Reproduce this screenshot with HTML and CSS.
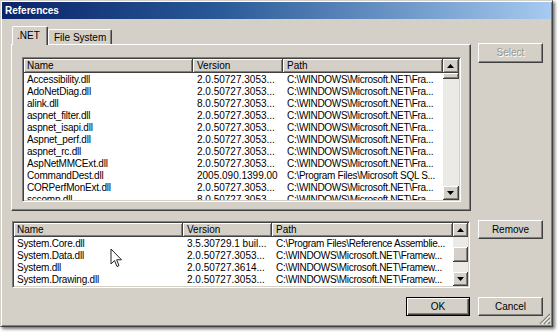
FILE: index.html
```html
<!DOCTYPE html>
<html>
<head>
<meta charset="utf-8">
<title>References</title>
<link rel="stylesheet" href="styles.css">
</head>
<body>
<div class="window">
  <div class="titlebar"><span class="title">References</span></div>
  <div class="content">
    <div class="row-top">
      <div class="tabs-area">
        <div class="tabstrip">
          <div class="tab tab-active">.NET</div>
          <div class="tab">File System</div>
        </div>
        <div class="panel">
          <div class="list list-top">
            <div class="list-main">
              <div class="hdr">
                <div class="hc w1">Name</div>
                <div class="hc w2">Version</div>
                <div class="hc w3">Path</div>
              </div>
              <div class="row"><div class="cell w1">Accessibility.dll</div><div class="cell w2">2.0.50727.3053...</div><div class="cell w3">C:\WINDOWS\Microsoft.NET\Fra...</div></div>
              <div class="row"><div class="cell w1">AdoNetDiag.dll</div><div class="cell w2">2.0.50727.3053...</div><div class="cell w3">C:\WINDOWS\Microsoft.NET\Fra...</div></div>
              <div class="row"><div class="cell w1">alink.dll</div><div class="cell w2">8.0.50727.3053...</div><div class="cell w3">C:\WINDOWS\Microsoft.NET\Fra...</div></div>
              <div class="row"><div class="cell w1">aspnet_filter.dll</div><div class="cell w2">2.0.50727.3053...</div><div class="cell w3">C:\WINDOWS\Microsoft.NET\Fra...</div></div>
              <div class="row"><div class="cell w1">aspnet_isapi.dll</div><div class="cell w2">2.0.50727.3053...</div><div class="cell w3">C:\WINDOWS\Microsoft.NET\Fra...</div></div>
              <div class="row"><div class="cell w1">Aspnet_perf.dll</div><div class="cell w2">2.0.50727.3053...</div><div class="cell w3">C:\WINDOWS\Microsoft.NET\Fra...</div></div>
              <div class="row"><div class="cell w1">aspnet_rc.dll</div><div class="cell w2">2.0.50727.3053...</div><div class="cell w3">C:\WINDOWS\Microsoft.NET\Fra...</div></div>
              <div class="row"><div class="cell w1">AspNetMMCExt.dll</div><div class="cell w2">2.0.50727.3053...</div><div class="cell w3">C:\WINDOWS\Microsoft.NET\Fra...</div></div>
              <div class="row"><div class="cell w1">CommandDest.dll</div><div class="cell w2">2005.090.1399.00</div><div class="cell w3">C:\Program Files\Microsoft SQL S...</div></div>
              <div class="row"><div class="cell w1">CORPerfMonExt.dll</div><div class="cell w2">2.0.50727.3053...</div><div class="cell w3">C:\WINDOWS\Microsoft.NET\Fra...</div></div>
              <div class="row"><div class="cell w1">sccomp.dll</div><div class="cell w2">8.0.50727.3053...</div><div class="cell w3">C:\WINDOWS\Microsoft.NET\Fra...</div></div>
            </div>
            <div class="vscroll">
              <div class="sbtn"><svg width="7" height="4" viewBox="0 0 7 4"><path d="M3.5 0 L7 4 L0 4 Z" fill="#000"/></svg></div>
              <div class="thumb thumb-top"></div>
              <div class="track"></div>
              <div class="sbtn"><svg width="7" height="4" viewBox="0 0 7 4"><path d="M0 0 L7 0 L3.5 4 Z" fill="#000"/></svg></div>
            </div>
          </div>
        </div>
      </div>
      <div class="side">
        <div class="btn btn-disabled">Select</div>
      </div>
    </div>

    <div class="row-mid">
      <div class="list list-bot">
        <div class="list-main">
          <div class="hdr">
            <div class="hc w1">Name</div>
            <div class="hc w2">Version</div>
            <div class="hc w3">Path</div>
          </div>
          <div class="row"><div class="cell w1">System.Core.dll</div><div class="cell w2">3.5.30729.1 buil...</div><div class="cell w3">C:\Program Files\Reference Assemblie...</div></div>
          <div class="row"><div class="cell w1">System.Data.dll</div><div class="cell w2">2.0.50727.3053...</div><div class="cell w3">C:\WINDOWS\Microsoft.NET\Framew...</div></div>
          <div class="row"><div class="cell w1">System.dll</div><div class="cell w2">2.0.50727.3614...</div><div class="cell w3">C:\WINDOWS\Microsoft.NET\Framew...</div></div>
          <div class="row"><div class="cell w1">System.Drawing.dll</div><div class="cell w2">2.0.50727.3053...</div><div class="cell w3">C:\WINDOWS\Microsoft.NET\Framew...</div></div>
        </div>
        <div class="vscroll vscroll-bot">
          <div class="sbtn"><svg width="7" height="4" viewBox="0 0 7 4"><path d="M3.5 0 L7 4 L0 4 Z" fill="#000"/></svg></div>
          <div class="track track-a"></div>
          <div class="thumb thumb-bot"></div>
          <div class="track"></div>
          <div class="sbtn"><svg width="7" height="4" viewBox="0 0 7 4"><path d="M0 0 L7 0 L3.5 4 Z" fill="#000"/></svg></div>
        </div>
      </div>
      <div class="btn btn-remove">Remove</div>
    </div>

    <div class="row-bot">
      <div class="btn btn-default">OK</div>
      <div class="btn">Cancel</div>
    </div>
  </div>
  <svg class="grip" width="12" height="12" viewBox="0 0 12 12">
    <path d="M11 1 L1 11 M11 5 L5 11 M11 9 L9 11" stroke="#808080" stroke-width="1.2"/>
    <path d="M11 2.5 L2.5 11 M11 6.5 L6.5 11" stroke="#fff" stroke-width="1"/>
  </svg>
</div>
<svg class="cursor" width="13" height="21" viewBox="0 0 13 21">
  <path d="M1 1 L1 16 L4.5 12.5 L7 18.5 L9 17.6 L6.6 11.8 L11.5 11.8 Z" fill="#fff" stroke="#222" stroke-width="1" stroke-linejoin="round"/>
</svg>
</body>
</html>
```

FILE: styles.css
```css
* { box-sizing: border-box; }
html, body { margin: 0; padding: 0; }
body {
  background: #ffffff;
  width: 558px;
  height: 333px;
  overflow: hidden;
  position: relative;
  font-family: "Liberation Sans", Arial, sans-serif;
  font-size: 10px;
  color: #000;
}
.window {
  position: relative;
  width: 553px;
  height: 327px;
  background: #d4d0c8;
  border-top: 1px solid #d4d0c8;
  border-left: 1px solid #d4d0c8;
  border-right: 1px solid #404040;
  border-bottom: 1px solid #404040;
  box-shadow: inset 1px 1px #ffffff, inset -1px -1px #808080, 2px 2px 3px rgba(0,0,0,0.55);
  padding: 1px;
  display: flex;
  flex-direction: column;
}
.titlebar {
  height: 17px;
  background: linear-gradient(to right, #0a246a 0%, #2a5a98 40%, #a6caf0 100%);
  display: flex;
  align-items: center;
  padding-left: 3px;
  flex-shrink: 0;
}
.title {
  color: #fff;
  font-weight: bold;
  font-size: 10px;
}
.content {
  flex: 1;
  padding: 7px 8px 0 9px;
  display: flex;
  flex-direction: column;
}
.row-top {
  display: flex;
  gap: 7px;
}
.tabs-area {
  width: 460px;
  display: flex;
  flex-direction: column;
}
.tabstrip {
  display: flex;
  align-items: flex-end;
  height: 18px;
  padding-left: 1px;
  position: relative;
  z-index: 2;
}
.tab {
  height: 15px;
  padding: 1px 5px 0 5px;
  background: #d4d0c8;
  border-top: 1px solid #fff;
  border-left: 1px solid #fff;
  border-right: 1px solid #404040;
  box-shadow: inset -1px 0 #808080;
  border-radius: 2px 2px 0 0;
  display: flex;
  align-items: center;
}
.tab-active {
  height: 19px;
  margin-bottom: -1px;
  width: 36px;
  padding: 0 0 1px 4px;
}
.panel {
  height: 167px;
  background: #d4d0c8;
  border-top: 1px solid #fff;
  border-left: 1px solid #fff;
  border-right: 1px solid #404040;
  border-bottom: 1px solid #404040;
  box-shadow: inset -1px -1px #808080;
  padding: 12px 8px 0 10px;
}
.list {
  display: flex;
  background: #fff;
  border-top: 1px solid #808080;
  border-left: 1px solid #808080;
  border-right: 1px solid #fff;
  border-bottom: 1px solid #fff;
  box-shadow: inset 1px 1px #404040, inset -1px -1px #d4d0c8;
  padding: 1px;
}
.list-top {
  width: 439px;
  height: 145px;
}
.list-main {
  flex: 1;
  overflow: hidden;
  background: #fff;
}
.hdr {
  display: flex;
  height: 14px;
}
.hc {
  height: 14px;
  line-height: 14px;
  padding-left: 4px;
  background: #d4d0c8;
  box-shadow: inset -1px -1px #404040, inset 1px 1px #fff, inset -2px -2px #808080;
  white-space: nowrap;
  overflow: hidden;
}
.row {
  display: flex;
  height: 12px;
}
.cell {
  height: 12px;
  line-height: 13px;
  padding-left: 4px;
  white-space: nowrap;
  overflow: hidden;
}
.w1 { letter-spacing: -0.2px; }
.w3 { letter-spacing: -0.3px; }
.list-top .w1 { width: 169px; padding-left: 3px; }
.list-top .w2 { width: 90px; }
.list-top .w3 { width: 160px; }
.list-bot .w1 { width: 169px; padding-left: 3px; }
.list-bot .w2 { width: 89px; }
.list-bot .w3 { width: 181px; }
.hc.w1, .hc.w3 { letter-spacing: 0; }

.vscroll {
  width: 16px;
  display: flex;
  flex-direction: column;
  background: #eceae6;
}
.vscroll-bot { width: 15px; }
.sbtn, .thumb {
  background: #d4d0c8;
  box-shadow: inset -1px -1px #404040, inset 1px 1px #fff, inset -2px -2px #808080;
}
.sbtn {
  height: 14px;
  display: flex;
  align-items: center;
  justify-content: center;
  padding-bottom: 1px;
  padding-right: 1px;
}
.sbtn svg { display: block; }
.track { flex: 1; }
.track-a { flex: 0 0 10px; }
.thumb-top { height: 6px; }
.thumb-bot { height: 15px; }

.side {
  width: 65px;
  padding-top: 17px;
}
.btn {
  width: 65px;
  height: 19px;
  background: #d4d0c8;
  border-top: 1px solid #fff;
  border-left: 1px solid #fff;
  border-right: 1px solid #404040;
  border-bottom: 1px solid #404040;
  box-shadow: inset -1px -1px #808080;
  display: flex;
  align-items: center;
  justify-content: center;
  padding-bottom: 1px;
}
.btn-disabled {
  height: 20px;
  color: #9a968f;
  text-shadow: 1px 1px #fff;
}
.row-mid {
  display: flex;
  margin-top: 10px;
  align-items: flex-start;
}
.list-bot {
  width: 458px;
  height: 67px;
  margin-left: 1px;
  margin-right: 8px;
}
.btn-remove {
  margin-top: -1px;
}
.row-bot {
  display: flex;
  justify-content: flex-end;
  gap: 8px;
  margin-top: 9px;
}
.btn-default {
  width: 64px;
  border: 1px solid #000;
  box-shadow: inset 1px 1px #fff, inset -1px -1px #404040, inset -2px -2px #808080;
}
.grip {
  position: absolute;
  right: 1px;
  bottom: 1px;
}
.cursor {
  position: absolute;
  left: 110px;
  top: 248px;
}
```
